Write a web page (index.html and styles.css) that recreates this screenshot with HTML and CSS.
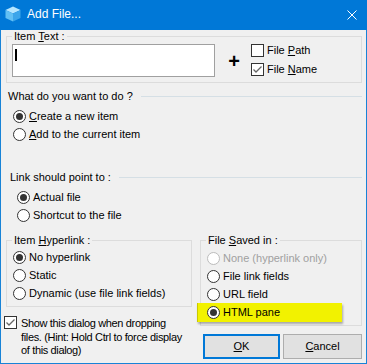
FILE: index.html
```html
<!DOCTYPE html>
<html lang="en">
<head>
    <meta charset="utf-8">
    <title>Add File...</title>
    <link rel="stylesheet" href="styles.css">
</head>
<body>
    <div class="window">
        <div class="titlebar">
            <svg class="app-icon" width="16" height="16" viewBox="0 0 16 16">
                <polygon points="8,0.5 15.5,4 8,7.5 0.5,4" fill="#b5e6ff"/>
                <polygon points="0.5,4 8,7.5 8,15.5 0.5,12" fill="#62c0f4"/>
                <polygon points="15.5,4 8,7.5 8,15.5 15.5,12" fill="#3ba5ea"/>
            </svg>
            <span class="title">Add File...</span>
            <svg class="close" width="10" height="10" viewBox="0 0 10 10">
                <path d="M0.5 0.5 L9.5 9.5 M9.5 0.5 L0.5 9.5" stroke="#fff" stroke-width="1"/>
            </svg>
        </div>

        <div class="client">
            <fieldset class="group">
                <legend>Item <u>T</u>ext :</legend>
                <div class="item-row">
                    <div class="textbox"><span class="caret"></span></div>
                    <span class="plus">+</span>
                    <div class="checks">
                        <label class="check"><span class="box"></span><span>File <u>P</u>ath</span></label>
                        <label class="check"><span class="box"><svg width="11" height="11" viewBox="0 0 11 11"><path d="M1.5 5.5 L4 8 L9.5 2.5" fill="none" stroke="#666" stroke-width="1.3"/></svg></span><span>File <u>N</u>ame</span></label>
                    </div>
                </div>
            </fieldset>

            <div class="section what">
                <div class="section-head">What do you want to do ?</div>
                <div class="radios">
                    <div class="radio"><span class="dot on"></span><span><u>C</u>reate a new item</span></div>
                    <div class="radio"><span class="dot"></span><span><u>A</u>dd to the current item</span></div>
                </div>
            </div>

            <div class="section link">
                <div class="section-head">Link should point to :</div>
                <div class="radios">
                    <div class="radio"><span class="dot on"></span>Actual file</div>
                    <div class="radio"><span class="dot"></span>Shortcut to the file</div>
                </div>
            </div>

            <div class="bottom">
                <div class="col">
                    <fieldset class="group">
                        <legend>Item <u>H</u>yperlink :</legend>
                        <div class="group-body hyperlink">
                            <div class="radio"><span class="dot on"></span>No hyperlink</div>
                            <div class="radio"><span class="dot"></span>Static</div>
                            <div class="radio"><span class="dot"></span>Dynamic (use file link fields)</div>
                        </div>
                    </fieldset>
                    <label class="show-dialog"><span class="box"><svg width="11" height="11" viewBox="0 0 11 11"><path d="M1.5 5.5 L4 8 L9.5 2.5" fill="none" stroke="#666" stroke-width="1.3"/></svg></span><span class="show-text">Show this dialog when dropping<br>files. (Hint: Hold Ctrl to force display of this dialog)</span></label>
                </div>
                <div class="col">
                    <fieldset class="group">
                        <legend>File <u>S</u>aved in :</legend>
                        <div class="group-body saved">
                            <div class="radio disabled"><span class="dot"></span>None (hyperlink only)</div>
                            <div class="radio"><span class="dot"></span>File link fields</div>
                            <div class="radio"><span class="dot"></span>URL field</div>
                            <div class="radio marked"><span class="dot on"></span>HTML pane</div>
                        </div>
                    </fieldset>
                    <div class="buttons">
                        <button type="button" class="btn default"><u>O</u>K</button>
                        <button type="button" class="btn"><u>C</u>ancel</button>
                    </div>
                </div>
            </div>
        </div>
    </div>
</body>
</html>
```

FILE: styles.css
```css
body {
    margin: 0;
    background: #fff;
    font: 11px/13px "Liberation Sans", Arial, sans-serif;
    color: #000;
}

.window {
    width: 367px;
    height: 364px;
    box-sizing: border-box;
    border: 1px solid #1883d7;
    border-top: none;
    background: #f0f0f0;
    display: flex;
    flex-direction: column;
}

.titlebar {
    height: 30px;
    flex: none;
    margin: 0 -1px;
    background: #0078d7;
    color: #fff;
    display: flex;
    align-items: center;
}
.app-icon {
    margin: 0 0 2px 5px;
}
.title {
    margin: 0 0 2px 6px;
    font-size: 12px;
    line-height: 14px;
}
.close {
    margin: 0 10px 1px auto;
}

.client {
    padding: 0 4px 0 5px;
}

.group {
    margin: 0;
    padding: 0;
    border: 1px solid #dcdcdc;
    min-width: 0;
}
.group legend {
    margin-left: 5px;
    padding: 0 2px;
    line-height: 13px;
}

.item-row {
    display: flex;
    align-items: flex-start;
    padding: 1px 0 5px 5px;
}
.textbox {
    width: 203px;
    height: 33px;
    box-sizing: border-box;
    border: 1px solid #a0a0a0;
    background: #fff;
    padding: 4px 0 0 2px;
}
.caret {
    display: block;
    width: 2px;
    height: 12px;
    background: #000;
}
.plus {
    width: 12px;
    margin: 7px 0 0 13px;
    text-align: center;
    font: bold 20px/20px "Liberation Sans", Arial, sans-serif;
}
.checks {
    margin-left: 11px;
    display: flex;
    flex-direction: column;
    gap: 6px;
}
.check {
    display: flex;
    align-items: center;
    height: 13px;
}
.box {
    width: 13px;
    height: 13px;
    flex: none;
    box-sizing: border-box;
    border: 1px solid #333;
    background: #fff;
    margin-right: 3px;
}
.box svg {
    display: block;
}

.section-head {
    display: flex;
    align-items: center;
}
.section-head::after {
    content: "";
    flex: 1;
    border-top: 1px solid #d5dfe5;
    margin-left: 8px;
}
.what {
    margin-top: 7px;
}
.what .section-head {
    padding-left: 2px;
}
.what .radios {
    margin-top: 4px;
    padding-left: 7px;
}
.link {
    margin-top: 28px;
}
.link .section-head {
    padding-left: 4px;
}
.link .radios {
    margin-top: 4px;
    padding-left: 11px;
}

.radio {
    display: flex;
    align-items: center;
    height: 18px;
}
.dot {
    width: 13px;
    height: 13px;
    flex: none;
    box-sizing: border-box;
    border: 1px solid #333;
    border-radius: 50%;
    background: #fff;
    margin-right: 3px;
    display: flex;
    align-items: center;
    justify-content: center;
}
.dot.on::after {
    content: "";
    width: 7px;
    height: 7px;
    border-radius: 50%;
    background: #333;
}
.radio.disabled {
    color: #a0a0a0;
}
.radio.disabled .dot {
    border-color: #bcbcbc;
}

.bottom {
    margin-top: 10px;
    display: grid;
    grid-template-columns: 186px 162px;
    column-gap: 8px;
}
.group-body {
    padding: 1px 0 4px 6px;
}
.group-body.saved {
    padding: 2px 0 3px 6px;
}
.radio.marked {
    width: 145px;
    height: 19px;
    box-sizing: border-box;
    margin-left: -10px;
    padding-left: 9px;
    border-left: 1px solid #c9c900;
    background: #f2f200;
    box-shadow: 1px 2px 2px rgba(0, 0, 0, 0.3);
}

.show-dialog {
    display: flex;
    align-items: flex-start;
    margin: 10px 0 0 -2px;
}
.show-dialog .box {
    margin: -1px 4px 0 0;
}
.show-text {
    width: 176px;
    line-height: 13.5px;
    letter-spacing: -0.35px;
}

.buttons {
    margin-top: 8px;
    padding-left: 3px;
    display: flex;
    gap: 3px;
}
.btn {
    width: 79px;
    height: 25px;
    box-sizing: border-box;
    padding: 0;
    border: 1px solid #adadad;
    background: #e1e1e1;
    font: inherit;
    color: #000;
}
.btn.default {
    width: 77px;
    border: 2px solid #0078d7;
}
```
